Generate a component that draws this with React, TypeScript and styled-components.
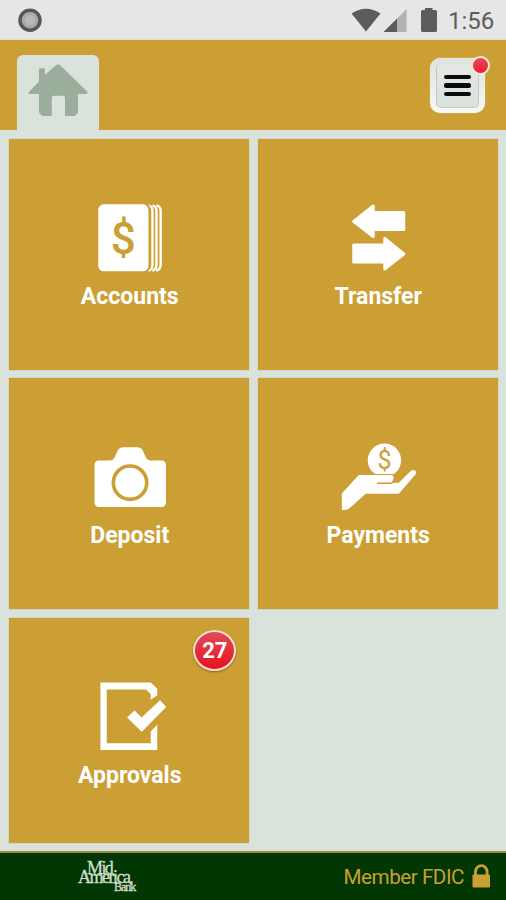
import React from "react";
import styled, { createGlobalStyle } from "styled-components";

const gold = "#cb9f34";
const mist = "#dae2dc";

const GlobalStyle = createGlobalStyle`
  body { margin: 0; background: ${mist}; }
  * { box-sizing: border-box; }
  svg { display: block; flex: none; }
`;

const Screen = styled.div`
  width: 506px;
  height: 900px;
  display: flex;
  flex-direction: column;
  background: ${mist};
  overflow: hidden;
  font-family: Roboto, sans-serif;
`;

const StatusBar = styled.div`
  height: 40px;
  flex: none;
  display: flex;
  justify-content: space-between;
  background: #e6e6e6;
  border-bottom: 1px solid #e4dfc4;
`;

const StatusIcons = styled.div`
  display: flex;
`;

const Clock = styled.div`
  width: 58px;
  font-size: 24px;
  line-height: 42px;
  color: #5c5c5c;
`;

const Header = styled.div`
  height: 90px;
  flex: none;
  display: flex;
  justify-content: space-between;
  align-items: flex-end;
  padding: 0 21px 0 17px;
  background: ${gold};
`;

const HomeTab = styled.div`
  width: 82px;
  height: 75px;
  border-radius: 6px 6px 0 0;
  background: ${mist};
`;

const MenuButton = styled.div`
  position: relative;
  width: 55px;
  height: 55px;
  margin-bottom: 17px;
  padding: 5px;
  border-radius: 10px;
  background: linear-gradient(#e0e2dd, #f7f8f5);
  box-shadow: 0 0 1px #f5eed8;
`;

const MenuFace = styled.div`
  height: 45px;
  margin: 0 1px 0 1px;
  display: flex;
  flex-direction: column;
  align-items: center;
  justify-content: center;
  gap: 4px;
  border: 1px solid #c3c8c4;
  border-top-color: #dfe3df;
  border-radius: 5px;
  background: linear-gradient(#e5e7e4, #dae2dc);
`;

const MenuLine = styled.div`
  width: 27px;
  height: 4.5px;
  border-radius: 2px;
  background: #090b0a;
`;

const AlertDot = styled.div`
  position: absolute;
  right: -5px;
  top: -2px;
  width: 19px;
  height: 19px;
  border: 2px solid #f4e7dc;
  border-radius: 50%;
  background: linear-gradient(#e64958, #ec1c31);
`;

const Tiles = styled.div`
  flex: 1;
  display: grid;
  grid-template-columns: 240px 240px;
  grid-template-rows: 231px 231px 225px;
  gap: 8.4px 8.5px;
  padding: 9px 0 0 9.25px;
`;

const Tile = styled.div`
  position: relative;
  display: flex;
  flex-direction: column;
  align-items: center;
  padding-top: 61px;
  background: ${gold};
  box-shadow: 0 0 1px #a6a17c;
`;

const Label = styled.div`
  height: 40px;
  padding-left: 1px;
  font-size: 23px;
  font-weight: 700;
  line-height: 43px;
  color: #fff;
`;

const Badge = styled.div`
  position: absolute;
  right: 13px;
  top: 12px;
  width: 43px;
  height: 41px;
  border: 2px solid #f3dfcc;
  border-radius: 50%;
  background: linear-gradient(#df4b59, #e8121f);
  box-shadow: 0 1px 2px #8a5f20;
  color: #fff;
  font-size: 22px;
  font-weight: 700;
  line-height: 37px;
  text-align: center;
`;

const Footer = styled.div`
  height: 49px;
  flex: none;
  display: flex;
  justify-content: space-between;
  border-top: 2px solid #a28a35;
  background: #003703;
`;

const Membership = styled.div`
  display: flex;
  padding-right: 15px;
  color: ${gold};
  font-size: 20.7px;
  letter-spacing: -0.5px;
  line-height: 48px;
`;

const sign = { fontFamily: "Roboto, sans-serif", textAnchor: "middle" } as const;

const icons = {
  accounts: (
    <svg width="80" height="75" viewBox="89.25 200 80 75" fill="#fff">
      <rect x="98.500" y="204.300" width="50.200" height="67" rx="5.500" />
      <g fill="none" stroke="#fff" strokeWidth="2.400">
        <path d="M148.500 205.300q4.200 1 4.200 5.500v54q0 4.500-4.200 6" />
        <path d="M152.700 205.300q4 1 4 5.500v54q0 4.500-4 6" />
        <path d="M156.600 205.300q4.300 1 4.300 5.500v54q0 4.500-4.300 6" />
      </g>
      <path d="M146 204.300q4.500 1 4.500 6v55q0 4.500-4.500 6" fill="none" stroke={gold} strokeWidth="1.300" />
      <text x="123.600" y="254" fontSize="44" fontWeight="500" fill={gold} {...sign}>$</text>
    </svg>
  ),
  transfer: (
    <svg width="80" height="75" viewBox="337.75 200 80 75" fill="#fff" stroke="#fff" strokeWidth="3" strokeLinejoin="round">
      <path d="M353.500 221.500 373 206v6.500h30.500v17H373v7z" />
      <path d="M403.500 254 384.500 238.500v6.500h-31v17h31v7z" />
    </svg>
  ),
  deposit: (
    <svg width="80" height="75" viewBox="89.25 439 80 75" fill="#fff">
      <path d="M99 460.500h11q3.500 0 5-3.500l2.500-5.500q1.800-4.200 6-4.200h14q4.200 0 6 4.200L146 457q1.500 3.500 5 3.500h11a4.200 4.200 0 0 1 4.200 4.200v38a4.200 4.200 0 0 1-4.200 4.200H99a4.200 4.200 0 0 1-4.200-4.200v-38a4.200 4.200 0 0 1 4.200-4.200z" />
      <circle cx="130.300" cy="482.700" r="16.700" fill="none" stroke={gold} strokeWidth="3.600" />
    </svg>
  ),
  payments: (
    <svg width="80" height="75" viewBox="337.75 439 80 75" fill="#fff">
      <circle cx="384.200" cy="460.300" r="16.700" />
      <text x="384.200" y="468.800" fontSize="25" fontWeight="400" fill={gold} {...sign}>$</text>
      <path d="M341.600 493.500 358.500 475h32q3 0 3 3.500 0 3.700-2.500 4.200h7.500L410.500 471q2.800-2.300 5 .2 1 1.700-.5 3.500L398.500 493.700h-33L349.500 508q-2 2-5 2h-2.900z" stroke={gold} strokeWidth="2.200" paintOrder="stroke" />
      <path d="M376.800 483.200H391q2.600-.6 2.700-4.200" fill="none" stroke={gold} strokeWidth="1.600" />
    </svg>
  ),
  approvals: (
    <svg width="80" height="75" viewBox="89.25 679 80 75" fill="#fff">
      <path d="M100.700 682.500H151l6.500 6.300v6.500l-6.500 4.500v-5.600l-4.500-4.700h-39.500v53.700H151v-12l6.500-6.500v25.200h-56.800z" />
      <path d="m127.300 717.500 7.500-7 7 7 18.500-17.200 6.200 6.800-24.500 24.600z" />
    </svg>
  ),
};

const tiles: { label: string; icon: keyof typeof icons; count?: number }[] = [
  { label: "Accounts", icon: "accounts" },
  { label: "Transfer", icon: "transfer" },
  { label: "Deposit", icon: "deposit" },
  { label: "Payments", icon: "payments" },
  { label: "Approvals", icon: "approvals", count: 27 },
];

export default function App() {
  return (
    <Screen>
      <GlobalStyle />
      <StatusBar>
        <svg width="60" height="39">
          <circle cx="30" cy="20.200" r="10" fill="#aaa" stroke="#575757" strokeWidth="3.500" />
          <circle cx="30" cy="20.200" r="5" fill="#b9b9b9" />
        </svg>
        <StatusIcons>
          <svg width="100" height="39" viewBox="348 0 100 39" fill="#5c5c5c">
            <path d="M351.500 13.500q14.500-9.500 29 0L366 31.500z" />
            <path d="M406.700 9v23H383.500z" fill="#b2b2b2" />
            <path d="M397 18.700V32H383.500z" />
            <path d="M425 8h7.500v2h3a1.500 1.500 0 0 1 1.500 1.500V30.500a1.500 1.500 0 0 1-1.500 1.500h-13a1.500 1.500 0 0 1-1.500-1.500V11.500a1.500 1.500 0 0 1 1.500-1.500h2.500z" />
          </svg>
          <Clock>1:56</Clock>
        </StatusIcons>
      </StatusBar>
      <Header>
        <HomeTab>
          <svg width="82" height="75" viewBox="17 55 82 75" fill="#9bae9c">
            <path d="M29 92 39 81.500v-12q0-1.200 1.200-1.200h3.600q1.200 0 1.200 1.200v5.200L55 66q3-2.800 6 0l26.300 25.800q1 2-1.500 2.200H78v18q-.4 2.600-3.500 4H65V98q0-2.200-2-2.200H54q-2.200 0-2.200 2.200v18h-9q-3.300-1.400-3.800-4V94h-9q-2.500 0-1-2z" />
          </svg>
        </HomeTab>
        <MenuButton>
          <MenuFace>
            <MenuLine />
            <MenuLine />
            <MenuLine />
          </MenuFace>
          <AlertDot />
        </MenuButton>
      </Header>
      <Tiles>
        {tiles.map(({ label, icon, count }) => (
          <Tile key={label}>
            {icons[icon]}
            <Label>{label}</Label>
            {count && <Badge>{count}</Badge>}
          </Tile>
        ))}
      </Tiles>
      <Footer>
        <svg width="150" height="47" viewBox="0 853 150 47" fill="#d5dfce" stroke="#d5dfce" strokeWidth="0.3" fontFamily='"Liberation Serif", serif'>
          <text x="87" y="873.500" fontSize="18" letterSpacing="-1.600">Mid</text>
          <text x="78" y="883" fontSize="18" letterSpacing="-1.500">America</text>
          <path d="M130.500 881.500h2l-1.500 3.500h-1z" />
          <text x="114" y="891" fontSize="12" letterSpacing="-1">Bank</text>
        </svg>
        <Membership>
          Member FDIC
          <svg width="27" height="47" viewBox="464 853 27 47" fill={gold}>
            <path d="M475.500 876v-4.500a5.800 5.800 0 0 1 11.600 0v4.500" fill="none" stroke={gold} strokeWidth="2.800" />
            <rect x="472.500" y="874.500" width="17.500" height="13" rx="1" />
          </svg>
        </Membership>
      </Footer>
    </Screen>
  );
}
